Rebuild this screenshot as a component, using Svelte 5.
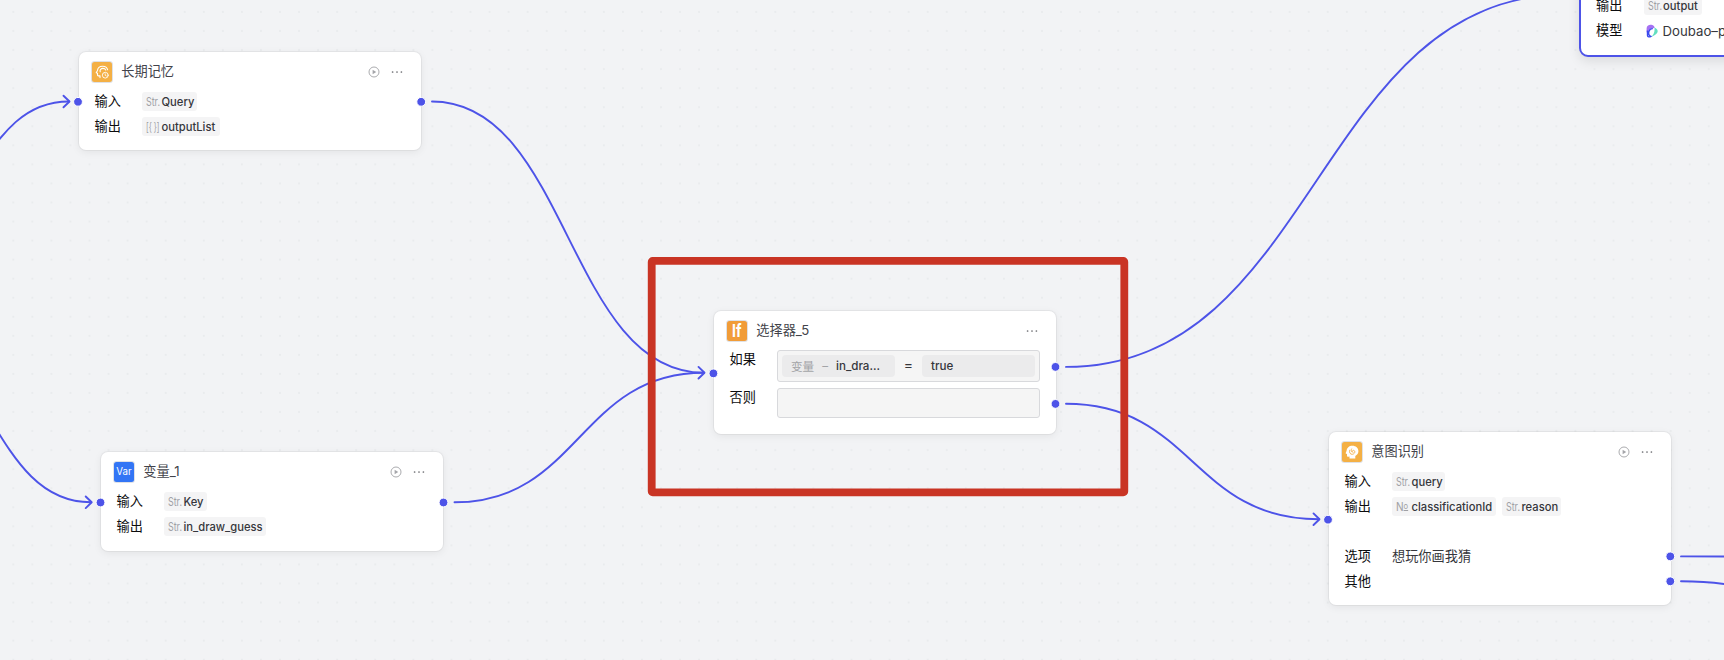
<script>
  const nodes = [
    {
      id: 'memory', x: 79, y: 52, h: 98, icon: 'memory', title: '长期记忆', run: true,
      rows: [
        { label: '输入', tags: [['Str.', 'Query', 55]] },
        { label: '输出', tags: [['[{ }]', 'outputList', 78]] }
      ]
    },
    {
      id: 'variable', x: 101, y: 452.4, h: 99, icon: 'var', title: '变量_1', run: true,
      rows: [
        { label: '输入', tags: [['Str.', 'Key', 43]] },
        { label: '输出', tags: [['Str.', 'in_draw_guess', 102]] }
      ]
    },
    { id: 'selector', x: 714, y: 311, h: 123, icon: 'if', title: '选择器_5', run: false, branch: true, rows: [] },
    {
      id: 'intent', x: 1329, y: 432.4, h: 173, icon: 'intent', title: '意图识别', run: true,
      rows: [
        { label: '输入', tags: [['Str.', 'query', 53]] },
        { label: '输出', tags: [['No', 'classificationId', 104], ['Str.', 'reason', 59]] },
        { label: '' },
        { label: '选项', text: '想玩你画我猜' },
        { label: '其他' }
      ]
    },
    {
      id: 'model', x: 1578.6, y: -45, h: 102.4, selected: true,
      rows: [
        { label: '输出', tags: [['Str.', 'output', 58]] },
        { label: '模型', text: 'Doubao–pro', logo: true }
      ]
    }
  ];

  const link = (x1, y1, x2, y2) => {
    const m = (x1 + x2) / 2;
    return `M${x1} ${y1}C${m} ${y1} ${m} ${y2} ${x2} ${y2}`;
  };
  const edges = [
    link(-110, 232, 69, 101.5),
    link(-110, 337.5, 91, 502.3),
    link(432, 101.5, 704, 372.7),
    link(454.5, 502.3, 704, 372.7),
    link(1066, 366.9, 1567, -5.5),
    link(1066, 403.8, 1319, 519.2),
    link(1681, 556.4, 1900, 558),
    link(1681, 581.2, 1860, 610)
  ];
  const tips = [[69.5, 101.5], [91.7, 502.3], [704.5, 372.7], [1319.5, 519.2]];
  const ports = [
    [78, 101.8], [421.2, 101.8], [100.5, 502.5], [443.5, 502.5], [713.4, 373.4],
    [1055.5, 366.9], [1055.5, 403.9], [1328, 519.7], [1670.3, 556.4], [1670.3, 581.3]
  ];
</script>

<main class="canvas">
  <svg class="layer" width="1724" height="660">
    <defs>
      <pattern id="grid" x="3.8" y="2.5" width="19.05" height="19.05" patternUnits="userSpaceOnUse">
        <circle cx="9.5" cy="9.5" r="1.1" fill="#e9ebed" />
      </pattern>
    </defs>
    <rect width="1724" height="660" fill="url(#grid)" />
    <g fill="none" stroke="#4d53e8" stroke-width="1.9" stroke-linecap="round" stroke-linejoin="round">
      {#each edges as d}<path {d} />{/each}
      {#each tips as [x, y]}<path d="M{x - 6} {y - 5.8}L{x} {y}L{x - 6} {y + 5.8}" />{/each}
    </g>
  </svg>

  {#each nodes as n (n.id)}
    <section class="node" class:selected={n.selected} style="left:{n.x}px;top:{n.y}px;height:{n.h}px">
      <header class="head">
        {#if n.title}
          <span class="badge {n.icon}">
            {#if n.icon === 'var'}
              <span class="var-text">Var</span>
            {:else if n.icon === 'if'}
              <span class="if-text">If</span>
            {:else if n.icon === 'memory'}
              <svg width="20" height="20" viewBox="0 0 20 20" fill="none" stroke="#fff" stroke-width="1.1" stroke-linecap="round" stroke-linejoin="round">
                <path d="M8 15.6v-1.7H6.3q-.8 0-.8-.9v-1.8l-1.3-.5 1.3-2.3C5.8 5.5 8 4.2 10.6 4.2c2.5 0 4.5 1.3 5 3.6" />
                <path d="M8.2 9.800C7.600 7.700 9 6.400 10.900 6.400c1.500 0 2.500.7 2.900 1.700" />
                <circle cx="13.3" cy="13.2" r="2.9" stroke-width=".9" />
                <path d="M13.2 11.7v1.7l1.1.6" stroke-width=".8" />
              </svg>
            {:else}
              <svg width="20" height="20" viewBox="0 0 20 20">
                <path d="M10.400 3.800c-3.300 0-5.600 2.100-5.800 5L3.700 11c-.1.400.1.600.5.700l.8.200v1.600c0 .9.500 1.300 1.300 1.200l1.200-.1v1.900h5.800v-2.600c2-1 3.100-2.700 3.100-4.700 0-3.200-2.600-5.400-6-5.400z" fill="#fff" />
                <path d="M7.700 8.200c-.8 2.500.7 4.300 2.600 4.100 1.800-.2 2.600-1.500 2.500-2.600-.1-1.200-1.200-1.700-2-1.200-.9.600-.6 1.800.2 1.900M9.600 6.900c-.6 1-.5 2.200.3 3" fill="none" stroke="#f3af45" stroke-width=".9" stroke-linecap="round" />
              </svg>
            {/if}
          </span>
          <h2>{n.title}</h2>
          {#if n.run}
            <svg class="run" width="12" height="12" viewBox="0 0 12 12">
              <circle cx="6" cy="6" r="5" fill="none" stroke="#a5a6aa" stroke-width=".95" />
              <path d="M4.600 3.700v4.600l3.600-2.300z" fill="#a5a6aa" />
            </svg>
          {/if}
          <svg class="more" width="12" height="4" viewBox="0 0 12 4" fill="#6b6c71">
            <circle cx="1.6" cy="2" r=".85" /><circle cx="6" cy="2" r=".85" /><circle cx="10.4" cy="2" r=".85" />
          </svg>
        {/if}
      </header>

      {#if n.branch}
        <div class="branch">
          <span class="label">如果</span>
          <div class="box">
            <span class="chip"><i>变量</i><i class="dash">–</i>in_dra...</span>
            <b>=</b>
            <span class="chip value">true</span>
          </div>
        </div>
        <div class="branch otherwise">
          <span class="label">否则</span>
          <div class="box"></div>
        </div>
      {/if}

      {#each n.rows as r}
        <div class="row">
          <span class="label">{r.label}</span>
          {#each r.tags ?? [] as [type, name, w]}
            <span class="tag" style="width:{w}px">
              <span class="type" class:list={type[0] === '['} class:num={type === 'No'}><span>{#if type === 'No'}N<u>o</u>{:else}{type}{/if}</span></span>{name}
            </span>
          {/each}
          {#if r.logo}
            <svg class="logo" width="12" height="14" viewBox="0 0 12 14" fill="none">
              <path d="M.6 8.500V4.500C.7 1.200 3.800.1 6.300 1.100 7.900 1.800 8.500 2.800 8.700 3.800L7 4.200C5.300 3.700 3.800 4.600 3 6.500z" fill="#a571f3" />
              <path d="M1.500 6.500v4.800c.2 1.800 1.900 1.900 3.400 1.100C3.100 11.600 2.300 9.500 2.900 7.500 3.500 5.600 5 4.500 6.800 4.600" stroke="#3a49ee" stroke-width="1.400" />
              <path d="M8.400 3.600c3.900 1.700 4.200 4.400 1.500 6.700-1.300 1.200-3 2.100-4.800 2.500C7.800 10.900 9 7.600 8.400 3.600z" fill="#62dfc0" />
            </svg>
          {/if}
          {#if r.text}<span class="text" class:latin={r.logo}>{r.text}</span>{/if}
        </div>
      {/each}
    </section>
  {/each}

  <svg class="layer" width="1724" height="660">
    {#each ports as [x, y]}<circle cx={x} cy={y} r="4.4" fill="#4d53e8" stroke="#fff" stroke-width="1" />{/each}
    <rect x="651.7" y="260.900" width="472.6" height="231.4" rx="1" fill="none" stroke="#c93424" stroke-width="7.8" stroke-linejoin="round" />
  </svg>
</main>

<style>
  :global(body) { margin: 0; background: #f2f3f5; }
  .canvas {
    position: relative; width: 1724px; height: 660px; overflow: hidden; background: #f2f3f5;
    font-family: Inter, "Noto Sans CJK SC", sans-serif; color: #1a1a1c;
  }
  .layer { position: absolute; inset: 0; pointer-events: none; }
  .node {
    position: absolute; box-sizing: border-box; width: 341.5px; padding-top: 9px;
    border-radius: 7px; background: #fff;
    box-shadow: 0 0 0 1px rgba(6, 7, 9, .045), 0 2px 8px rgba(6, 7, 9, .07);
  }
  .node.selected { border: 2px solid #4d53e8; border-radius: 9px; padding-top: 30.4px; box-shadow: 0 4px 12px rgba(0, 0, 0, .1); }
  .head { display: flex; align-items: center; height: 22px; padding: 0 17.5px 0 13px; margin-bottom: 6px; }
  .selected .head { height: 0; }
  .badge {
    display: flex; align-items: center; justify-content: center; flex: none;
    width: 20px; height: 20px; border-radius: 2.5px; box-shadow: 0 0 0 1px #dfe1e6; color: #fff;
  }
  .memory, .intent { background: #f4b045; }
  .var { background: #3275f5; }
  .if { background: #f19c38; }
  .var-text { font-size: 9.7px; line-height: 18px; }
  .if-text { font-size: 17px; font-weight: 700; line-height: 1; transform: scaleX(.82); }
  h2 { flex: 1; margin: -2px 0 0 9.3px; font-size: 13.2px; line-height: 20px; font-weight: 400; color: #42434a; }
  .run { margin-right: 11.5px; }
  .row { display: flex; align-items: center; height: 25px; padding-left: 16px; }
  .label { flex: none; width: 47.5px; margin: -2px 0 0 -.5px; font-size: 13.2px; line-height: 20px; color: #0c0c0e; }
  .tag {
    display: flex; align-items: center; box-sizing: border-box; height: 19px; padding-left: 4px; margin-right: 6px;
    border-radius: 3px; background: #f4f4f5; font-size: 11.2px; line-height: 18px; font-weight: 500; color: #36373c; white-space: nowrap;
  }
  .type { flex: none; width: 15.5px; color: #a0a1a5; font-weight: 400; font-size: 12px; }
  .type span { display: inline-block; transform: scaleX(.74); transform-origin: left; }
  .type.list span { transform: scaleX(.6); }
  .type.num span { transform: scaleX(.84); }
  .type u { font-size: 9px; vertical-align: 2px; text-underline-offset: 1px; }
  .text { margin-top: -2px; font-size: 13.2px; line-height: 20px; color: #36373c; }
  .latin { margin: 0 0 0 5px; white-space: nowrap; }
  .logo { margin-left: 2px; }
  .branch { display: flex; align-items: flex-start; padding: 2.4px 15.5px 0 16px; }
  .branch .label { margin-top: -1px; }
  .otherwise { padding-top: 6px; }
  .box {
    display: flex; align-items: center; flex: 1; box-sizing: border-box; height: 32px; padding: 0 4px;
    border: 1px solid #d8d9dc; border-radius: 3px; background: #f5f5f5;
  }
  .otherwise .box { height: 30px; }
  .box b { flex: 1; margin-top: -3px; text-align: center; font-size: 14px; font-weight: 400; color: #36373c; }
  .chip {
    display: flex; align-items: center; box-sizing: border-box; width: 113px; height: 22px; padding-left: 9px;
    border-radius: 4px; background: #ebebec; font-size: 11.6px; font-weight: 500; color: #36373c;
  }
  .chip i { font-style: normal; font-weight: 400; color: #a3a4a7; }
  .chip .dash { margin: 0 8px; }
</style>
